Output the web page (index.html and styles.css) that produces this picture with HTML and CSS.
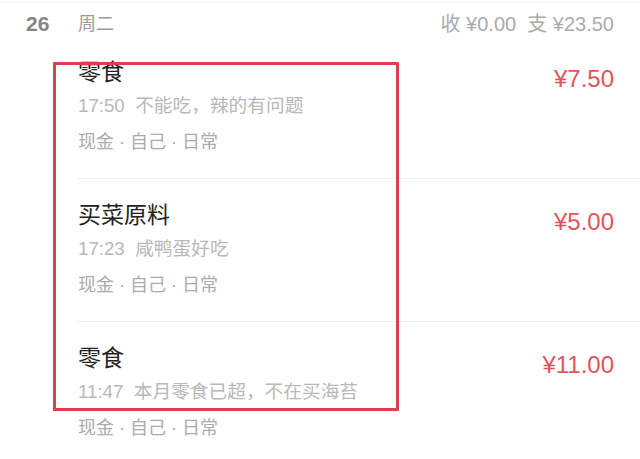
FILE: index.html
```html
<!DOCTYPE html>
<html lang="zh-CN">
<head>
<meta charset="utf-8">
<link rel="stylesheet" href="styles.css">
</head>
<body>
<div class="page">
  <div class="topline"></div>
  <div class="day-header">
    <span class="day-num">26</span>
    <span class="day-week">周二</span>
    <span class="day-sum">收 ¥0.00&nbsp; 支 ¥23.50</span>
  </div>
  <div class="list">
    <div class="item first">
      <div class="info">
        <div class="title">零食</div>
        <div class="sub">17:50&nbsp; 不能吃，辣的有问题</div>
        <div class="tags">现金 · 自己 · 日常</div>
      </div>
      <div class="amount">¥7.50</div>
    </div>
    <div class="item">
      <div class="info">
        <div class="title">买菜原料</div>
        <div class="sub">17:23&nbsp; 咸鸭蛋好吃</div>
        <div class="tags">现金 · 自己 · 日常</div>
      </div>
      <div class="amount">¥5.00</div>
    </div>
    <div class="item">
      <div class="info">
        <div class="title">零食</div>
        <div class="sub">11:47&nbsp; 本月零食已超，不在买海苔</div>
        <div class="tags">现金 · 自己 · 日常</div>
      </div>
      <div class="amount">¥11.00</div>
    </div>
  </div>
  <div class="highlight"></div>
</div>
</body>
</html>
```
FILE: styles.css
```css
* { box-sizing: border-box; }
html, body {
  margin: 0;
  padding: 0;
  background: #ffffff;
}
body {
  font-family: "Liberation Sans", "Noto Sans CJK SC", sans-serif;
  width: 640px;
  height: 459px;
  overflow: hidden;
}
.page {
  position: relative;
  width: 640px;
  height: 459px;
}
.topline {
  margin-top: 2px;
  height: 1px;
  background: #f2f2f2;
}
.day-header {
  display: flex;
  align-items: flex-end;
  height: 33px;
  padding: 10px 26px 0 26px;
  line-height: 24px;
}
.day-num {
  font-size: 21px;
  font-weight: 700;
  color: #858585;
  width: 52px;
}
.day-week {
  font-size: 18px;
  color: #9a9a9a;
}
.day-sum {
  margin-left: auto;
  font-size: 20px;
  color: #ababab;
}
.list {
  margin-left: 78px;
}
.item {
  display: flex;
  justify-content: space-between;
  align-items: flex-start;
  height: 143px;
  border-top: 1px solid #efefef;
  padding: 20px 26px 0 0;
}
.item.first {
  border-top: none;
  height: 142px;
}
.title {
  font-size: 23px;
  line-height: 32px;
  color: #222222;
}
.sub {
  font-size: 18.7px;
  line-height: 36px;
  color: #b8b8b8;
}
.tags {
  font-size: 18px;
  line-height: 36px;
  color: #ababab;
}
.amount {
  font-size: 24px;
  line-height: 32px;
  padding-top: 7px;
  color: #e0545c;
}
.highlight {
  position: absolute;
  left: 53px;
  top: 60px;
  width: 346px;
  height: 349px;
  border: 3px solid #d9404f;
  border-radius: 1px;
}
```
